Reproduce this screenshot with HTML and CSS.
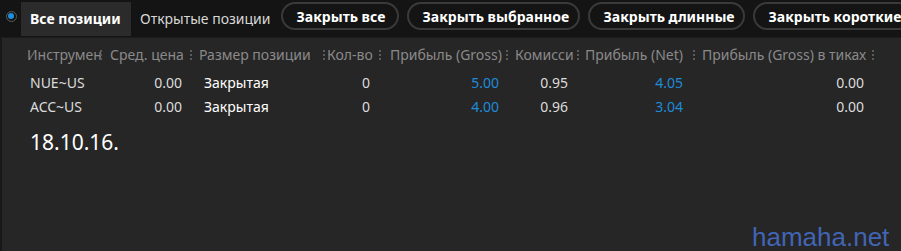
FILE: index.html
```html
<!DOCTYPE html>
<html lang="ru">
<head>
<meta charset="utf-8">
<link rel="stylesheet" href="styles.css">
</head>
<body>
<div class="app">
  <div class="topbar">
    <span class="radio"><span class="radio-dot"></span></span>
    <div class="tab active">Все позиции</div>
    <div class="tab">Открытые позиции</div>
    <div class="buttons">
      <button class="pill b1">Закрыть все</button>
      <button class="pill b2">Закрыть выбранное</button>
      <button class="pill b3">Закрыть длинные</button>
      <button class="pill b4">Закрыть короткие</button>
    </div>
  </div>
  <div class="content">
    <div class="grid">
      <div class="h c1">Инструмен</div>
      <div class="h c2">Сред. цена</div>
      <div class="h c3">Размер позиции</div>
      <div class="h c4">Кол-во</div>
      <div class="h c5">Прибыль (Gross)</div>
      <div class="h c6">Комисси</div>
      <div class="h c7">Прибыль (Net)</div>
      <div class="h c8">Прибыль (Gross) в тиках</div>
      <div class="h c9"></div>

      <div class="d c1">NUE~US</div>
      <div class="d c2 r">0.00</div>
      <div class="d c3 w">Закрытая</div>
      <div class="d c4 r">0</div>
      <div class="d c5 r blue">5.00</div>
      <div class="d c6 r">0.95</div>
      <div class="d c7 r blue">4.05</div>
      <div class="d c8 r">0.00</div>
      <div class="d c9"></div>

      <div class="d c1">ACC~US</div>
      <div class="d c2 r">0.00</div>
      <div class="d c3 w">Закрытая</div>
      <div class="d c4 r">0</div>
      <div class="d c5 r blue">4.00</div>
      <div class="d c6 r">0.96</div>
      <div class="d c7 r blue">3.04</div>
      <div class="d c8 r">0.00</div>
      <div class="d c9"></div>
    </div>
    <div class="date">18.10.16.</div>
  </div>
  <div class="watermark">hamaha.net</div>
</div>
</body>
</html>
```

FILE: styles.css
```css
* { box-sizing: border-box; }
html, body {
  margin: 0;
  padding: 0;
  background: #262626;
  width: 901px;
  height: 251px;
  overflow: hidden;
}
body {
  font-family: "Noto Sans", "Open Sans", sans-serif;
  color: #dcdcdc;
}
.app {
  position: relative;
  width: 901px;
  height: 251px;
  display: flex;
  flex-direction: column;
}
.topbar {
  height: 37px;
  background: #141414;
  display: flex;
  align-items: flex-start;
  flex: none;
  white-space: nowrap;
  overflow: hidden;
}
.radio {
  width: 11px;
  height: 11px;
  border-radius: 50%;
  border: 1.5px solid #5a5a5a;
  margin: 10.5px 0 0 5.5px;
  display: flex;
  align-items: center;
  justify-content: center;
  flex: none;
}
.radio-dot {
  width: 6px;
  height: 6px;
  border-radius: 50%;
  background: #1e90dc;
}
.tab {
  height: 34px;
  margin-top: 2px;
  line-height: 33px;
  font-size: 14px;
  color: #d8d8d8;
  padding: 0 9px;
  flex: none;
}
.tab.active {
  margin-left: 4.5px;
  width: 110px;
  background: #2b2b2b;
  color: #ffffff;
  font-weight: 700;
}
.buttons {
  display: flex;
  gap: 8px;
  margin-left: 1px;
  padding-top: 2px;
  flex: none;
}
.pill {
  height: 28px;
  border: 2px solid #3a3a3a;
  border-radius: 14px;
  background: #141414;
  color: #ffffff;
  font-family: inherit;
  font-size: 14px;
  font-weight: 700;
  padding: 0 14px;
  flex: none;
  text-align: center;
  white-space: nowrap;
}
.b1 { width: 118px; }
.b2 { width: 173px; }
.b3 { width: 157px; }
.b4 { width: 160px; }
.content {
  flex: 1;
  background: #262626;
  border-left: 2px solid #181818;
  border-top: 1px solid #1c1c1c;
}
.grid {
  display: grid;
  grid-template-columns: 80px 90px 133px 56px 127px 71px 116px 179px 1fr;
  grid-template-rows: 32px 24px 24px;
  margin-left: 20px;
  padding-top: 1px;
  font-size: 14px;
}
.h, .d {
  white-space: nowrap;
  overflow: hidden;
  position: relative;
}
.h {
  color: #8a8a8a;
  line-height: 32px;
}
.h::after {
  content: "";
  position: absolute;
  right: 0;
  top: 11px;
  width: 2px;
  height: 10px;
  background: repeating-linear-gradient(to bottom, #5a5a5a 0 2px, transparent 2px 4px);
}
.h.c9::after { display: none; }
.h.c1 { padding-left: 5px; }
.h.c2 { padding-left: 8px; }
.h.c3 { padding-left: 7px; }
.h.c4 { padding-left: 2px; }
.h.c5 { padding-left: 9px; }
.h.c6 { padding-left: 7px; }
.h.c7 { padding-left: 6px; }
.h.c8 { padding-left: 7px; }
.d {
  line-height: 24px;
  color: #dcdcdc;
}
.d.c1 { padding-left: 8px; }
.d.c3 { padding-left: 12px; }
.d.r { text-align: right; }
.d.c2 { padding-right: 10px; }
.d.c4 { padding-right: 11px; }
.d.c5 { padding-right: 9px; }
.d.c6 { padding-right: 11px; }
.d.c7 { padding-right: 12px; }
.d.c8 { padding-right: 10px; }
.w { color: #ffffff; }
.blue { color: #1e8ad8; }
.date {
  margin: 8px 0 0 28px;
  font-size: 21px;
  color: #ffffff;
  line-height: 30px;
}
.watermark {
  position: absolute;
  left: 752px;
  top: 222px;
  font-family: "Liberation Sans", Arial, sans-serif;
  font-size: 26px;
  line-height: 30px;
  color: #4165b4;
}
```
